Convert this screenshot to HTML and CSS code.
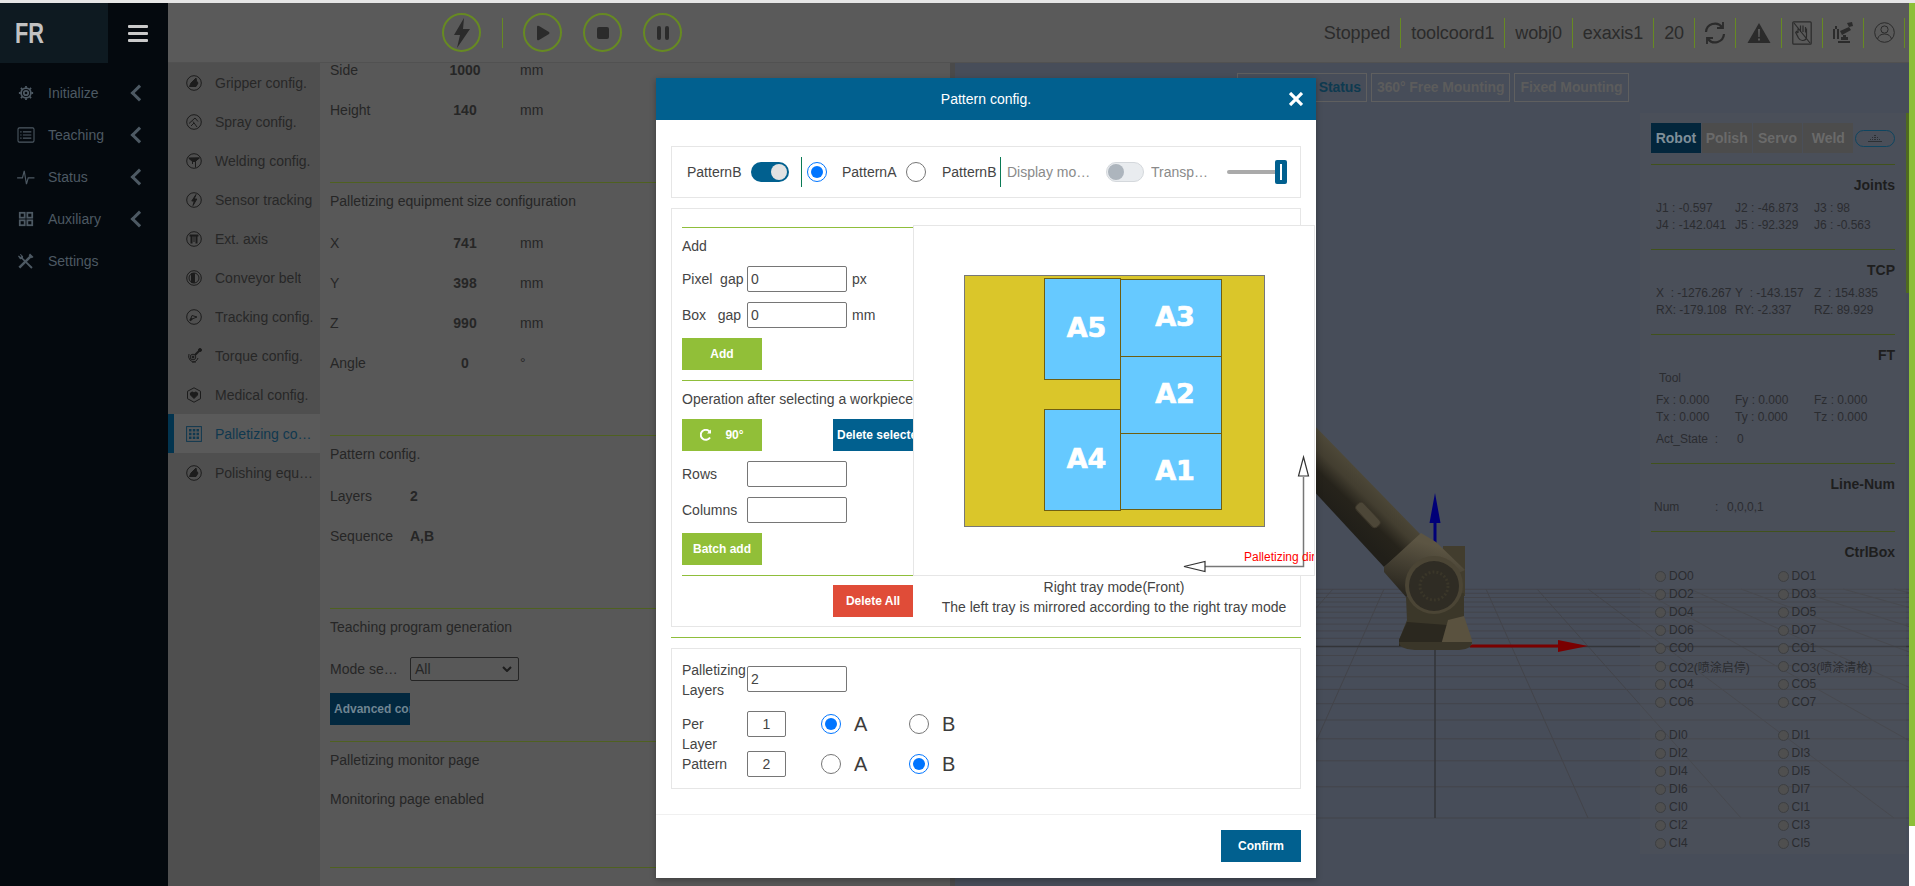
FILE: index.html
```html
<!DOCTYPE html>
<html lang="en">
<head>
    <meta charset="UTF-8">
    <meta name="viewport" content="width=device-width, initial-scale=1.0">
    <title>Palletizing config</title>
    <link rel="stylesheet" href="styles.css">
</head>
<body>
<div class="strip"></div>
<div class="app">
    <aside class="sidebar">
        <div class="brand">
            <div class="logo">
                <svg width="30" height="24" viewBox="0 0 30 24"><text x="0" y="22" font-family="Liberation Sans" font-weight="bold" font-size="30" fill="#c2c2c2" textLength="29" lengthAdjust="spacingAndGlyphs">FR</text></svg>
            </div>
            <div class="burger"><span></span><span></span><span></span></div>
        </div>
        <nav class="menu">
            <div class="menu-item">
                <svg class="menu-icon" viewBox="0 0 18 18" fill="none" stroke="#4d5963" stroke-width="2"><circle cx="9" cy="9" r="2.500"/><circle cx="9" cy="9" r="5.500"/><path d="M9 1v2M9 15v2M1 9h2M15 9h2M3.300 3.300l1.500 1.500M13.200 13.200l1.500 1.500M3.300 14.700l1.500-1.500M13.200 4.800l1.500-1.500"/></svg>
                <span class="menu-text">Initialize</span><span class="chev"></span>
            </div>
            <div class="menu-item">
                <svg class="menu-icon menu-icon-wide" viewBox="0 0 20 18" fill="none" stroke="#4d5963" stroke-width="1.200"><rect x="1" y="1" width="18" height="16" rx="1.500"/><path d="M6.500 5.500H16M6.500 9H16M6.500 12.500H16M3.500 5.500h1.500M3.500 9h1.500M3.500 12.500h1.500"/></svg>
                <span class="menu-text">Teaching</span><span class="chev"></span>
            </div>
            <div class="menu-item">
                <svg class="menu-icon menu-icon-wide" viewBox="0 0 20 18" fill="none" stroke="#4d5963" stroke-width="1.300"><path d="M0 10h6l2-8 2.500 15 2-7h7"/></svg>
                <span class="menu-text">Status</span><span class="chev"></span>
            </div>
            <div class="menu-item">
                <svg class="menu-icon" viewBox="0 0 18 18" fill="none" stroke="#4d5963" stroke-width="2"><rect x="2" y="2" width="5.500" height="5.500"/><rect x="10.500" y="2" width="5.500" height="5.500"/><rect x="2" y="10.500" width="5.500" height="5.500"/><rect x="10.500" y="10.500" width="5.500" height="5.500"/></svg>
                <span class="menu-text">Auxiliary</span><span class="chev"></span>
            </div>
            <div class="menu-item">
                <svg class="menu-icon" viewBox="0 0 18 18" fill="#4d5963"><path d="M3 1l2.800 2.800-.3 1.800 11 10.400-1.600 1.700L4.200 6.800l-1.900.2L0 3.700l1 -.9 1.900 1.700 1-1L2.100 1.900z"/><path d="M13.500.500l4 4-2 1.500-.8-.6L2.500 17.500 0.500 15.500 12.600 3.300 12 2.500z"/></svg>
                <span class="menu-text">Settings</span>
            </div>
        </nav>
    </aside>

    <div class="main">
        <header class="topbar">
            <div class="ctrl"><svg width="20" height="30" viewBox="0 0 20 30" fill="#2b2b2b"><path d="M12 0L2 17h6L5 30l13-19h-7z"/></svg></div>
            <div class="vline"></div>
            <div class="ctrl"><svg width="14" height="16" viewBox="0 0 14 16" fill="#2b2b2b"><path d="M1 2q0-2 2-1l10 6q1 1 0 2L3 15q-2 1-2-1z"/></svg></div>
            <div class="ctrl"><span class="stop"></span></div>
            <div class="ctrl"><span class="pause"></span><span class="pause"></span></div>
            <div class="status">
                <div class="stat">Stopped</div>
                <div class="stat">toolcoord1</div>
                <div class="stat">wobj0</div>
                <div class="stat">exaxis1</div>
                <div class="stat">20</div>
                <div class="stat-icon">
                    <svg width="22" height="24" viewBox="0 0 22 24" fill="none" stroke="#2b2b2b" stroke-width="2.200"><path d="M2 11a9 9 0 0 1 16-5M20 13a9 9 0 0 1-16 5"/><path d="M19 1v6h-6M3 23v-6h6" stroke-width="1.800"/></svg>
                </div>
                <div class="stat-icon stat-icon-wide">
                    <svg width="24" height="20" viewBox="0 0 24 20"><path d="M12 0l11.500 20H.500z" fill="#2b2b2b"/><path d="M11 6h2l-.3 8h-1.400zM11 15.500h2v2h-2z" fill="#5a5a5a"/></svg>
                </div>
                <div class="stat-icon">
                    <svg width="20" height="24" viewBox="0 0 20 24" fill="none" stroke="#2b2b2b" stroke-width="1.200"><rect x=".8" y=".8" width="18.400" height="22.400" rx="1"/><path d="M6 12V6.500M8.500 11V4.500M11 11V4.500M13.500 11.500V6M6 12l-1.500-1.500-.8 1L6.500 17q1.500 2.500 4 2.500 4 0 4-4v-8M2 2l16 20"/></svg>
                </div>
                <div class="stat-icon">
                    <svg width="22" height="24" viewBox="0 0 22 24" fill="#2b2b2b"><path d="M1 8h2v10H1zM5 8h2v10H5zM3 5h2v3H3zM8 10l9-4 2 3-9 5zM9 16h7v3H9zM6 20h12v2H6zM15 2l5-1 1 4-4 1z"/><path d="M11 14h3v3h-3z"/></svg>
                </div>
                <div class="stat-icon">
                    <svg width="21" height="21" viewBox="0 0 21 21" fill="none" stroke="#2b2b2b" stroke-width="1"><circle cx="10.500" cy="10.500" r="9.800"/><circle cx="10.500" cy="7.500" r="3.600"/><path d="M3.500 17q1.500-5 7-5t7 5"/></svg>
                </div>
            </div>
        </header>

        <div class="work">
            <nav class="subnav">
                <div class="sub-item"><span class="sub-icon"><svg viewBox="0 0 16 16"><circle cx="8" cy="8" r="7.300"/><path d="M3.500 11.500L5 8l5-5 .5 3 1.500 2-2 3.500z" class="fill"/></svg></span><span class="sub-text">Gripper config.</span></div>
                <div class="sub-item"><span class="sub-icon"><svg viewBox="0 0 16 16"><circle cx="8" cy="8" r="7.300"/><path d="M3 9.500l6-5.500 3 3.500M7 7.500l4 5.500M5 12l3-3"/></svg></span><span class="sub-text">Spray config.</span></div>
                <div class="sub-item"><span class="sub-icon"><svg viewBox="0 0 16 16"><circle cx="8" cy="8" r="7.300"/><path d="M2.500 5h11L9.500 8v6.500M6.500 8v3"/><path d="M3 5.500l3.500 3h3L13 5z" class="fill"/></svg></span><span class="sub-text">Welding config.</span></div>
                <div class="sub-item"><span class="sub-icon"><svg viewBox="0 0 16 16"><circle cx="8" cy="8" r="7.300"/><path d="M10 2.500L5.800 9h2.500L7 13.500 10.800 7H8.200z" class="fill"/></svg></span><span class="sub-text">Sensor tracking</span></div>
                <div class="sub-item"><span class="sub-icon"><svg viewBox="0 0 16 16"><circle cx="8" cy="8" r="7.300"/><path d="M3.500 4.500h9M5.500 5v7.500M10.500 5v7.500" stroke-width="2"/><path d="M8 5v6"/></svg></span><span class="sub-text">Ext. axis</span></div>
                <div class="sub-item"><span class="sub-icon"><svg viewBox="0 0 16 16"><circle cx="8" cy="8" r="7.300"/><circle cx="8" cy="8" r="5"/><path d="M5.500 3.500h3v9h-3z" class="fill"/></svg></span><span class="sub-text">Conveyor belt</span></div>
                <div class="sub-item"><span class="sub-icon"><svg viewBox="0 0 16 16"><circle cx="8" cy="8" r="7.300"/><path d="M4 11.500L6 6.500l5 1.500-5 2z"/><path d="M4 11.500l2-2" stroke-width="2"/></svg></span><span class="sub-text">Tracking config.</span></div>
                <div class="sub-item"><span class="sub-icon"><svg viewBox="0 0 16 16"><path d="M10 14a6 6 0 0 1-7-8"/><path d="M12 10a6 6 0 0 1-6 4"/><circle cx="7" cy="9" r="2.800"/><circle cx="7" cy="9" r="1" class="fill"/><path d="M9 7l4.500-4.500" stroke-width="2"/><circle cx="14" cy="2" r="1.500" class="fill"/></svg></span><span class="sub-text">Torque config.</span></div>
                <div class="sub-item"><span class="sub-icon"><svg viewBox="0 0 16 16"><path d="M8 .800l6.500 3.500v7.400L8 15.200l-6.500-3.500V4.300z"/><path d="M8 11.500L4.500 8q-1-2.500 1.500-3 1.500 0 2 1 .5-1 2-1 2.500.5 1.500 3z" class="fill"/></svg></span><span class="sub-text">Medical config.</span></div>
                <div class="sub-item sub-active"><span class="sub-icon"><svg viewBox="0 0 16 16"><rect x=".6" y=".6" width="14.800" height="14.800" stroke="#10384f"/><path fill="#10384f" stroke="none" d="M3 3h2.500v2.500H3zM6.800 3h2.500v2.500H6.800zM10.500 3H13v2.500h-2.500zM3 6.800h2.500v2.500H3zM6.800 6.800h2.500v2.500H6.800zM10.500 6.800H13v2.500h-2.500zM3 10.500h2.500V13H3zM6.800 10.500h2.500V13H6.800zM10.500 10.500H13V13h-2.500z"/></svg></span><span class="sub-text">Palletizing config.</span></div>
                <div class="sub-item"><span class="sub-icon"><svg viewBox="0 0 16 16"><circle cx="8" cy="8" r="7.300"/><path d="M3.500 11.500L5 8l5-5 .5 3 1.500 2-2 3.500z" class="fill"/></svg></span><span class="sub-text">Polishing equipment</span></div>
            </nav>

            <section class="content">
                <div class="sec sec-first">
                    <div class="rows">
                        <div class="row"><span class="lab">Side</span><span class="val">1000</span><span>mm</span></div>
                        <div class="row"><span class="lab">Height</span><span class="val">140</span><span>mm</span></div>
                    </div>
                </div>
                <div class="sec">
                    <div class="sec-title">Palletizing equipment size configuration</div>
                    <div class="rows">
                        <div class="row"><span class="lab">X</span><span class="val">741</span><span>mm</span></div>
                        <div class="row"><span class="lab">Y</span><span class="val">398</span><span>mm</span></div>
                        <div class="row"><span class="lab">Z</span><span class="val">990</span><span>mm</span></div>
                        <div class="row"><span class="lab">Angle</span><span class="val">0</span><span>°</span></div>
                    </div>
                </div>
                <div class="sec">
                    <div class="sec-title">Pattern config.</div>
                    <div class="rows">
                        <div class="row"><span class="lab">Layers</span><b>2</b></div>
                        <div class="row"><span class="lab">Sequence</span><b>A,B</b></div>
                    </div>
                </div>
                <div class="sec sec-short">
                    <div class="sec-title">Teaching program generation</div>
                    <div class="rows">
                        <div class="row"><span class="lab lab-cut">Mode selection</span><span class="fake-select">All<svg width="10" height="6" viewBox="0 0 10 6" fill="none" stroke="#1d1d1d" stroke-width="2"><path d="M1 1l4 4 4-4"/></svg></span></div>
                    </div>
                    <div class="adv-btn">Advanced config</div>
                </div>
                <div class="sec sec-last">
                    <div class="sec-title">Palletizing monitor page</div>
                    <div class="row">Monitoring page enabled</div>
                </div>
            </section>

            <div class="split"></div>

            <section class="viewport">
                <svg class="scene" width="954" height="823" viewBox="955 63 954 823">
                    <defs>
                        <linearGradient id="armShade" x1="1384" y1="478" x2="1344" y2="520" gradientUnits="userSpaceOnUse">
                            <stop offset="0" stop-color="#55503f"/>
                            <stop offset=".45" stop-color="#433e30"/>
                            <stop offset=".7" stop-color="#26231b"/>
                            <stop offset="1" stop-color="#211f19"/>
                        </linearGradient>
                        <linearGradient id="collarShade" x1="1415" y1="540" x2="1400" y2="590" gradientUnits="userSpaceOnUse">
                            <stop offset="0" stop-color="#5c5543"/>
                            <stop offset="1" stop-color="#2b2820"/>
                        </linearGradient>
                    </defs>
                    <path fill="none" stroke="#43444a" stroke-width="1" d="M955 818H1909M955 786.800H1909M955 760.800H1909M955 738.800H1909M955 720H1909M955 703.700H1909M955 689.400H1909M955 676.800H1909M955 665.600H1909M955 655.500H1909M955 638.300H1909M955 630.900H1909M955 624.100H1909M955 617.900H1909M955 612.200H1909M955 606.900H1909M955 602H1909M955 597.500H1909M955 593.300H1909M955 589.300H1909"/>
                    <path fill="none" stroke="#43444a" stroke-width="1" d="M1333 589L1129 818M1384 589L1282 818M1486 589L1588 818M1537 589L1741 818M1588 589L1894 818M1639 589L2047 818M1690 589L2200 818M1741 589L2353 818M1792 589L2506 818M1843 589L2659 818M1894 589L2812 818"/>
                    <path fill="none" stroke="#333438" stroke-width="1.500" d="M955 646.500H1909M1435 646V818"/>
                    <path fill="#000078" d="M1435 493l5.500 30h-4v20h-3v-20h-4z"/>
                    <path fill="#7a0000" d="M1470 644.500h88v-4.500l30 6-30 6v-4.500h-88z"/>
                    <!-- robot arm -->
                    <path fill="url(#armShade)" d="M1310 421L1421 535 1384 567 1310 487z"/>
                    <rect x="1353" y="510" width="30" height="10" rx="4" transform="rotate(47 1368 515)" fill="#4d4738" stroke="#3a3529"/>
                    <rect x="1443" y="546" width="22" height="50" fill="#423d2e"/>
                    <path fill="url(#collarShade)" d="M1384 567L1421 533 1436 542 1465 570 1406 597 1384 572z"/>
                    <path fill="#3b3729" d="M1406 597L1464 593V622L1471 640 1399 640 1407 620z"/>
                    <path fill="#2b281f" d="M1407 622L1399 640V646H1442L1447 625z"/>
                    <path fill="#5a523f" d="M1448 620L1464 616 1472 640V645H1441z"/>
                    <path fill="#3a3629" d="M1399 642Q1399 650 1420 650H1455Q1472 650 1472 642z"/>
                    <circle cx="1434" cy="585" r="29" fill="#4b4535"/>
                    <circle cx="1434" cy="586" r="25" fill="#2f2c24"/>
                    <circle cx="1434" cy="586" r="14" fill="none" stroke="#3a3629" stroke-width="3" stroke-dasharray="2 2"/>
                </svg>

                <div class="view-tabs">
                    <div class="view-tab view-tab-on">Robot &amp; Status</div>
                    <div class="view-tab">360° Free Mounting</div>
                    <div class="view-tab">Fixed Mounting</div>
                </div>

                <aside class="robot-panel">
                    <div class="robot-tabs">
                        <div class="robot-tab robot-tab-on">Robot</div>
                        <div class="robot-tab">Polish</div>
                        <div class="robot-tab">Servo</div>
                        <div class="robot-tab">Weld</div>
                        <div class="pill"><svg width="14" height="7" viewBox="0 0 14 7" fill="#2c3034"><path d="M6 0h2v1H6zM6 2h2v1H6zM4 2h1v1H4zM9 2h1v1H9zM6 4h2v1H6zM4 4h1v1H4zM9 4h1v1H9zM2 4h1v1H2zM11 4h1v1h-1zM0 6h14v1H0z"/></svg></div>
                    </div>

                    <div class="p-sec">
                        <div class="p-title">Joints</div>
                        <div class="p-data">
                            <span>J1 : -0.597</span><span>J2 : -46.873</span><span>J3 : 98</span>
                            <span>J4 : -142.041</span><span>J5 : -92.329</span><span>J6 : -0.563</span>
                        </div>
                    </div>
                    <div class="p-sec">
                        <div class="p-title">TCP</div>
                        <div class="p-data">
                            <span>X&nbsp; : -1276.267</span><span>Y&nbsp; : -143.157</span><span>Z&nbsp; : 154.835</span>
                            <span>RX: -179.108</span><span>RY: -2.337</span><span>RZ: 89.929</span>
                        </div>
                    </div>
                    <div class="p-sec">
                        <div class="p-title">FT</div>
                        <div class="p-tool">Tool</div>
                        <div class="p-data p-gap">
                            <span>Fx : 0.000</span><span>Fy : 0.000</span><span>Fz : 0.000</span>
                            <span>Tx : 0.000</span><span>Ty : 0.000</span><span>Tz : 0.000</span>
                        </div>
                        <div class="p-act"><span>Act_State&nbsp; :</span><span>0</span></div>
                    </div>
                    <div class="p-sec">
                        <div class="p-title">Line-Num</div>
                        <div class="p-num"><span class="num-lab">Num</span><span class="num-sep">:</span><span>0,0,0,1</span></div>
                    </div>
                    <div class="p-sec p-sec-end">
                        <div class="p-title">CtrlBox</div>
                        <div class="io">
                            <div class="io-item"><i></i>DO0</div><div class="io-item"><i></i>DO1</div>
                            <div class="io-item"><i></i>DO2</div><div class="io-item"><i></i>DO3</div>
                            <div class="io-item"><i></i>DO4</div><div class="io-item"><i></i>DO5</div>
                            <div class="io-item"><i></i>DO6</div><div class="io-item"><i></i>DO7</div>
                            <div class="io-item"><i></i>CO0</div><div class="io-item"><i></i>CO1</div>
                            <div class="io-item"><i></i>CO2(喷涂启停)</div><div class="io-item"><i></i>CO3(喷涂清枪)</div>
                            <div class="io-item"><i></i>CO4</div><div class="io-item"><i></i>CO5</div>
                            <div class="io-item"><i></i>CO6</div><div class="io-item"><i></i>CO7</div>
                        </div>
                        <div class="io io-in">
                            <div class="io-item"><i></i>DI0</div><div class="io-item"><i></i>DI1</div>
                            <div class="io-item"><i></i>DI2</div><div class="io-item"><i></i>DI3</div>
                            <div class="io-item"><i></i>DI4</div><div class="io-item"><i></i>DI5</div>
                            <div class="io-item"><i></i>DI6</div><div class="io-item"><i></i>DI7</div>
                            <div class="io-item"><i></i>CI0</div><div class="io-item"><i></i>CI1</div>
                            <div class="io-item"><i></i>CI2</div><div class="io-item"><i></i>CI3</div>
                            <div class="io-item"><i></i>CI4</div><div class="io-item"><i></i>CI5</div>
                        </div>
                    </div>
                </aside>
                <div class="panel-thumb"></div>
            </section>
        </div>
    </div>

    <div class="page-scroll"><div class="page-thumb"></div></div>
</div>

<div class="modal">
    <div class="modal-head">
        <span>Pattern config.</span>
        <svg class="modal-close" width="14" height="14" viewBox="0 0 14 14" stroke="#fff" stroke-width="3.200"><path d="M1 1l12 12M13 1L1 13"/></svg>
    </div>
    <div class="modal-body">
        <div class="panel pattern-bar">
            <span class="bar-label">PatternB</span>
            <span class="switch switch-on"><i></i></span>
            <span class="bar-line"></span>
            <input class="radio radio-bar" type="radio" name="pat" checked>
            <span class="bar-label pat-a">PatternA</span>
            <input class="radio radio-bar radio-b" type="radio" name="pat">
            <span class="bar-label pat-b">PatternB</span>
            <span class="bar-line"></span>
            <span class="bar-muted bar-display">Display mode</span>
            <span class="switch switch-off"><i></i></span>
            <span class="bar-muted bar-transp">Transparency</span>
            <span class="slider"><i></i></span>
        </div>

        <div class="panel editor">
            <div class="tools">
                <div class="tool-block tool-first">
                    <div class="tool-text">Add</div>
                    <div class="form-row"><label class="form-label">Pixel&nbsp;&nbsp;gap</label><input class="field" type="text" value="0"><span>px</span></div>
                    <div class="form-row"><label class="form-label">Box&nbsp;&nbsp;&nbsp;gap</label><input class="field" type="text" value="0"><span>mm</span></div>
                    <div class="btn btn-green">Add</div>
                </div>
                <div class="tool-block">
                    <div class="tool-text tool-nowrap">Operation after selecting a workpiece</div>
                    <div class="btn-row">
                        <div class="btn btn-green">
                            <svg width="12" height="12" viewBox="0 0 12 12" fill="none" stroke="#fff" stroke-width="2"><path d="M10 8.500A5 5 0 1 1 9.500 2.500"/><path d="M11 .500v4H7" fill="#fff" stroke="none"/></svg>
                            <span class="deg">90°</span>
                        </div>
                        <div class="btn btn-blue btn-clip">Delete selected</div>
                    </div>
                    <div class="form-row"><label class="form-label">Rows</label><input class="field" type="text"></div>
                    <div class="form-row"><label class="form-label">Columns</label><input class="field" type="text"></div>
                    <div class="btn btn-green">Batch add</div>
                </div>
                <div class="tool-block tool-end">
                    <div class="btn btn-red">Delete All</div>
                </div>
            </div>
            <div class="stage">
                <div class="tray-box">
                    <div class="tray">
                        <div class="piece a5">A5</div>
                        <div class="piece a3">A3</div>
                        <div class="piece a2">A2</div>
                        <div class="piece a1">A1</div>
                        <div class="piece a4">A4</div>
                    </div>
                    <svg class="tray-arrows" width="400" height="349" viewBox="0 0 400 349">
                        <path d="M389.500 251V340.500H291" fill="none" stroke="#777" stroke-width="1.500"/>
                        <path d="M389.500 231l5 19h-10z" fill="#fff" stroke="#333" stroke-width="1.200"/>
                        <path d="M270 340.500l21-5v10z" fill="#fff" stroke="#333" stroke-width="1.200"/>
                    </svg>
                    <div class="tray-note">Palletizing direction</div>
                </div>
                <div class="tray-caption">Right tray mode(Front)<br>The left tray is mirrored according to the right tray mode</div>
            </div>
        </div>

        <div class="green-rule"></div>

        <div class="panel layers">
            <div class="layers-head">
                <div class="layers-label">Palletizing Layers</div>
                <input class="field layers-field" type="text" value="2">
            </div>
            <div class="layers-grid">
                <div class="layers-label layers-label-tall">Per<br>Layer<br>Pattern</div>
                <div class="layers-rows">
                    <div class="layer-row">
                        <input class="field field-small" type="text" value="1">
                        <input class="radio radio-big" type="radio" name="l1" checked><span class="big-letter">A</span>
                        <input class="radio radio-big radio-big-b" type="radio" name="l1"><span class="big-letter">B</span>
                    </div>
                    <div class="layer-row">
                        <input class="field field-small" type="text" value="2">
                        <input class="radio radio-big" type="radio" name="l2"><span class="big-letter">A</span>
                        <input class="radio radio-big radio-big-b" type="radio" name="l2" checked><span class="big-letter">B</span>
                    </div>
                </div>
            </div>
        </div>
    </div>
    <div class="modal-foot"><div class="btn btn-blue">Confirm</div></div>
</div>
</body>
</html>
```

FILE: styles.css
```css
* {
    box-sizing: border-box;
}
html, body {
    margin: 0;
    height: 886px;
    overflow: hidden;
}
body {
    position: relative;
    font-family: "Liberation Sans", "Noto Sans CJK SC", sans-serif;
    font-size: 14px;
    color: #262626;
    background: #474d59;
}
.strip {
    height: 3px;
    background: #e6e6e6;
}
.app {
    display: flex;
    height: 883px;
}

/* left menu */
.sidebar {
    width: 168px;
    flex: none;
    background: #04090e;
}
.brand {
    display: flex;
    height: 60px;
}
.logo {
    width: 108px;
    background: #0e1a21;
    padding: 18px 0 0 15px;
}
.burger {
    flex: 1;
    display: flex;
    flex-direction: column;
    align-items: center;
    justify-content: center;
    gap: 4px;
}
.burger span {
    width: 20px;
    height: 3px;
    border-radius: 1px;
    background: #cacaca;
}
.menu {
    padding-top: 9px;
}
.menu-item {
    display: flex;
    align-items: center;
    height: 42px;
    padding-left: 18px;
    color: #4d5963;
}
.menu-icon {
    width: 16px;
    height: 16px;
    margin-right: 14px;
}
.menu-icon-wide {
    width: 20px;
    margin-left: -2px;
    margin-right: 12px;
}
.menu-text {
    flex: 1;
}
.chev {
    width: 12px;
    height: 12px;
    margin-right: 23px;
    border-left: 3px solid #4d5963;
    border-bottom: 3px solid #4d5963;
    transform: rotate(45deg);
}

.main {
    flex: 1;
    min-width: 0;
    display: flex;
    flex-direction: column;
}

/* top bar */
.topbar {
    height: 60px;
    display: flex;
    align-items: center;
    padding-left: 274px;
    padding-right: 4px;
    background: #5a5a5a;
    border-bottom: 1px solid #515151;
}
.ctrl {
    width: 39px;
    height: 39px;
    margin-right: 21px;
    border: 2px solid #678a22;
    border-radius: 50%;
    display: flex;
    align-items: center;
    justify-content: center;
    gap: 4px;
}
.vline {
    width: 1px;
    height: 30px;
    margin-right: 20px;
    background: #678a22;
}
.stop {
    width: 12px;
    height: 12px;
    border-radius: 2px;
    background: #2b2b2b;
}
.pause {
    width: 4px;
    height: 14px;
    border-radius: 2px;
    background: #2b2b2b;
}
.status {
    margin-left: auto;
    display: flex;
    align-items: center;
    font-size: 18px;
    letter-spacing: -0.1px;
    color: #2b2b2b;
}
.stat {
    height: 30px;
    line-height: 30px;
    padding: 0 10px;
    border-right: 1px solid #678a22;
}
.stat-icon {
    width: 41px;
    height: 30px;
    display: flex;
    align-items: center;
    justify-content: center;
    border-right: 1px solid #678a22;
}
.stat-icon-wide {
    width: 46px;
}

.work {
    flex: 1;
    min-height: 0;
    display: flex;
}

/* second menu */
.subnav {
    width: 152px;
    flex: none;
    background: #4f4f4f;
}
.sub-item {
    display: flex;
    align-items: center;
    height: 39px;
    padding-left: 18px;
    padding-right: 5px;
    color: #272727;
}
.sub-icon {
    width: 16px;
    height: 16px;
    flex: none;
    margin-right: 13px;
}
.sub-icon svg {
    display: block;
    width: 16px;
    height: 16px;
    fill: none;
    stroke: #1c1c1c;
    stroke-width: 1;
}
.sub-icon .fill {
    fill: #1c1c1c;
}
.sub-text {
    overflow: hidden;
    white-space: nowrap;
    text-overflow: ellipsis;
}
.sub-active {
    background: #5a5a5a;
    border-left: 6px solid #02344f;
    padding-left: 12px;
    padding-right: 7px;
    color: #10384f;
}

/* settings column */
.content {
    width: 630px;
    flex: none;
    overflow: hidden;
    padding-left: 10px;
    padding-right: 5px;
    background: #585858;
}
.sec {
    padding-bottom: 52px;
    border-bottom: 1px solid #4f6120;
}
.sec-first {
    margin-top: -13px;
}
.sec-short {
    padding-bottom: 16px;
}
.sec-last {
    padding-bottom: 48px;
}
.sec-last .row {
    margin-top: 1px;
}
.sec-title {
    height: 36px;
    line-height: 36px;
}
.rows {
    margin-top: 4px;
}
.sec-first .rows {
    margin-top: 0;
}
.row {
    height: 40px;
    display: flex;
    align-items: center;
}
.lab {
    width: 80px;
}
.lab-cut {
    overflow: hidden;
    white-space: nowrap;
    text-overflow: ellipsis;
    padding-right: 12px;
}
.val {
    width: 110px;
    text-align: center;
    font-weight: bold;
}
.fake-select {
    width: 109px;
    height: 24px;
    padding: 0 6px 0 4px;
    display: flex;
    align-items: center;
    justify-content: space-between;
    border: 1px solid #242424;
    border-radius: 2px;
}
.adv-btn {
    width: 80px;
    height: 32px;
    line-height: 32px;
    margin-top: 4px;
    padding-left: 4px;
    overflow: hidden;
    white-space: nowrap;
    font-size: 12px;
    font-weight: bold;
    color: #6f8592;
    background: #02283f;
}
.split {
    width: 5px;
    flex: none;
    background: #4a4a4a;
}

/* 3d view */
.viewport {
    flex: 1;
    position: relative;
    min-width: 0;
    overflow: hidden;
    background: #474d59;
}
.scene {
    position: absolute;
    left: 0;
    top: 0;
}
.view-tabs {
    position: absolute;
    left: 282px;
    top: 10px;
    display: flex;
    gap: 4px;
    font-size: 14px;
    font-weight: bold;
    letter-spacing: -0.1px;
}
.view-tab {
    height: 29px;
    line-height: 27px;
    padding: 0 5px;
    white-space: nowrap;
    color: #5c5c5c;
    border: 1px solid #5f5f5f;
}
.view-tab-on {
    width: 130px;
    display: flex;
    justify-content: flex-end;
    color: #0e3a50;
}
.robot-panel {
    position: absolute;
    left: 685px;
    top: 50px;
    width: 266px;
    height: 741px;
    padding: 10px 11px 0;
    background: rgba(80, 82, 88, 0.35);
    font-size: 12px;
    color: #2a2c30;
}
.panel-thumb {
    position: absolute;
    left: 951px;
    top: 50px;
    width: 3px;
    height: 180px;
    background: #4f6a20;
}
.robot-tabs {
    display: flex;
    align-items: center;
    gap: 1px;
    height: 30px;
    margin-bottom: 11px;
}
.robot-tab {
    width: 50px;
    height: 30px;
    line-height: 30px;
    text-align: center;
    font-size: 14px;
    font-weight: bold;
    color: #6a6a6a;
    background: #4c4c4c;
}
.robot-tab-on {
    color: #7f8f99;
    background: #03263c;
}
.pill {
    width: 40px;
    height: 17px;
    margin-left: 1px;
    display: flex;
    align-items: center;
    justify-content: center;
    border: 1px solid #0e4560;
    border-radius: 9px;
}
.p-sec {
    padding-bottom: 15px;
    border-top: 1px solid #41521c;
}
.p-sec-end {
    padding-bottom: 0;
}
.p-title {
    height: 35px;
    padding-top: 10px;
    line-height: 20px;
    text-align: right;
    font-size: 14px;
    font-weight: bold;
    color: #1e1e1e;
}
.p-data {
    display: grid;
    grid-template-columns: 79px 79px 79px;
    padding-left: 5px;
    line-height: 17px;
    white-space: nowrap;
}
.p-gap {
    margin-top: 5px;
}
.p-tool {
    padding-left: 8px;
    line-height: 17px;
}
.p-act {
    display: flex;
    gap: 19px;
    margin-top: 5px;
    padding-left: 5px;
    line-height: 17px;
}
.p-num {
    display: flex;
    padding-left: 3px;
    line-height: 17px;
}
.num-lab {
    width: 61px;
}
.num-sep {
    width: 12px;
}
.io {
    display: grid;
    grid-template-columns: 122.5px 122.5px;
    padding-left: 4px;
}
.io-in {
    margin-top: 15px;
}
.io-item {
    display: flex;
    align-items: center;
    height: 18px;
    white-space: nowrap;
}
.io-item i {
    width: 11px;
    height: 11px;
    margin-right: 3px;
    border: 1px solid #3d3f42;
    border-radius: 50%;
    background: #4f4f4f;
}

/* right edge */
.page-scroll {
    width: 6px;
    flex: none;
    background: #fff;
}
.page-thumb {
    height: 823px;
    background: #8dbf38;
}

/* dialog */
.modal {
    position: absolute;
    left: 656px;
    top: 78px;
    width: 660px;
    height: 800px;
    background: #fff;
    color: #444;
    box-shadow: 0 2px 6px rgba(0, 0, 0, 0.3);
}
.modal-head {
    position: relative;
    height: 42px;
    line-height: 42px;
    text-align: center;
    color: #fff;
    background: #01608f;
}
.modal-close {
    position: absolute;
    right: 13px;
    top: 14px;
}
.modal-body {
    padding: 26px 15px 0;
    height: 695px;
    border-bottom: 1px solid #f0f0f0;
}
.panel {
    border: 1px solid #e6e6e6;
}
.pattern-bar {
    height: 52px;
    display: flex;
    align-items: center;
    padding-left: 15px;
}
.bar-label {
    width: 64px;
}
.pat-a {
    margin-left: 15px;
}
.pat-b {
    margin-left: 16px;
    width: 58px;
}
.bar-line {
    width: 1px;
    height: 30px;
    background: #0a7a55;
}
.bar-muted {
    color: #8a8a8a;
    overflow: hidden;
    white-space: nowrap;
    text-overflow: ellipsis;
}
.bar-display {
    width: 84px;
    margin-left: 6px;
}
.bar-transp {
    width: 60px;
    margin-left: 7px;
}
.switch {
    width: 38px;
    height: 20px;
    position: relative;
    border-radius: 10px;
    flex: none;
}
.switch i {
    position: absolute;
    top: 3px;
    width: 14px;
    height: 14px;
    border-radius: 50%;
}
.switch-on {
    margin-right: 12px;
    background: #01608f;
}
.switch-on i {
    right: 2px;
    width: 16px;
    height: 16px;
    top: 2px;
    background: #e2e2e2;
}
.switch-off {
    margin-left: 15px;
    border: 1px solid #d4d8dc;
    background: #e9ecef;
}
.switch-off i {
    left: 1px;
    width: 16px;
    height: 16px;
    top: 1px;
    background: #adb5bd;
}
.slider {
    position: relative;
    width: 60px;
    height: 4px;
    margin-left: 16px;
    background: #aaa;
    border-radius: 2px;
}
.slider i {
    position: absolute;
    right: 0;
    top: -10px;
    width: 12px;
    height: 24px;
    border-radius: 2px;
    background: #01608f;
}
.slider i::after {
    content: "";
    position: absolute;
    left: 5px;
    top: 4px;
    width: 2px;
    height: 16px;
    background: #fff;
}
.radio {
    margin: 0;
    flex: none;
}
.radio-bar {
    width: 20px;
    height: 20px;
    margin-left: 5px;
}
.radio-b {
    margin-left: 0;
}
.editor {
    display: flex;
    height: 419px;
    margin-top: 10px;
    padding-left: 10px;
}
.tools {
    width: 231px;
    flex: none;
    padding-top: 18px;
}
.tool-block {
    border-top: 1px solid #8fbe3b;
    padding-top: 8px;
    height: 195px;
}
.tool-first {
    height: 153px;
}
.tool-end {
    height: 40px;
    padding-top: 9px;
    display: flex;
    justify-content: flex-end;
}
.tool-text {
    height: 20px;
    line-height: 20px;
}
.tool-nowrap {
    white-space: nowrap;
}
.form-row {
    display: flex;
    align-items: center;
    height: 26px;
    margin-top: 10px;
}
.form-label {
    width: 65px;
    flex: none;
}
.field {
    width: 100px;
    height: 26px;
    margin-right: 5px;
    padding: 1px 3px;
    border: 1px solid #767676;
    border-radius: 2px;
    font: 14px "Liberation Sans", sans-serif;
    color: #444;
    background: #fff;
}
.btn {
    width: 80px;
    height: 32px;
    margin-top: 10px;
    display: flex;
    align-items: center;
    justify-content: center;
    font-size: 12px;
    font-weight: bold;
    color: #fff;
}
.btn-green {
    background: #91bf38;
}
.btn-blue {
    background: #01608f;
}
.btn-red {
    margin-top: 0;
    background: #e04c38;
}
.btn-row {
    display: flex;
    justify-content: space-between;
}
.btn-clip {
    justify-content: flex-start;
    padding-left: 4px;
    overflow: hidden;
    white-space: nowrap;
}
.deg {
    margin-left: 13px;
}
.stage {
    width: 402px;
    flex: none;
    margin-top: 16px;
}
.tray-box {
    position: relative;
    height: 351px;
    overflow: hidden;
    border: 1px solid #e6e6e6;
    background: #fff;
}
.tray {
    position: absolute;
    left: 50px;
    top: 49px;
    width: 301px;
    height: 252px;
    border: 1px solid #777;
    background: #dac62a;
}
.piece {
    position: absolute;
    display: flex;
    align-items: center;
    justify-content: center;
    padding-left: 8px;
    padding-bottom: 3px;
    font-family: "DejaVu Sans", sans-serif;
    font-size: 27px;
    font-weight: bold;
    color: #fff;
    -webkit-text-stroke: 0.7px #fff;
    background: #66c9ff;
    border: 1px solid #6f5f12;
}
.a5 {
    left: 79px;
    top: 2px;
    width: 77px;
    height: 102px;
}
.a4 {
    left: 79px;
    top: 133px;
    width: 77px;
    height: 102px;
}
.a3 {
    left: 155px;
    top: 3px;
    width: 102px;
    height: 78px;
}
.a2 {
    left: 155px;
    top: 80px;
    width: 102px;
    height: 78px;
}
.a1 {
    left: 155px;
    top: 157px;
    width: 102px;
    height: 77px;
}
.tray-arrows {
    position: absolute;
    left: 0;
    top: 0;
}
.tray-note {
    position: absolute;
    left: 330px;
    top: 324px;
    font-size: 12px;
    line-height: 14px;
    white-space: nowrap;
    color: #f00;
}
.tray-caption {
    padding-top: 1px;
    text-align: center;
    line-height: 20px;
    white-space: nowrap;
}
.green-rule {
    height: 1px;
    margin-top: 10px;
    background: #8fbe3b;
}
.layers {
    height: 141px;
    margin-top: 10px;
    padding: 11px 0 0 10px;
}
.layers-head {
    display: flex;
    height: 40px;
}
.layers-label {
    width: 65px;
    flex: none;
    line-height: 20px;
}
.layers-field {
    margin-top: 6px;
}
.layers-grid {
    display: flex;
    margin-top: 11px;
}
.layers-label-tall {
    padding-top: 3px;
}
.layer-row {
    display: flex;
    align-items: center;
    height: 26px;
    margin-bottom: 14px;
}
.field-small {
    width: 39px;
    margin-right: 35px;
    text-align: center;
}
.radio-big {
    width: 20px;
    height: 20px;
}
.radio-big-b {
    margin-left: 0;
}
.big-letter {
    width: 68px;
    padding-left: 13px;
    font-size: 20px;
    color: #3c3c3c;
}
.modal-foot {
    display: flex;
    justify-content: flex-end;
    padding: 15px 15px 0 0;
}
.modal-foot .btn {
    margin-top: 0;
}
```
